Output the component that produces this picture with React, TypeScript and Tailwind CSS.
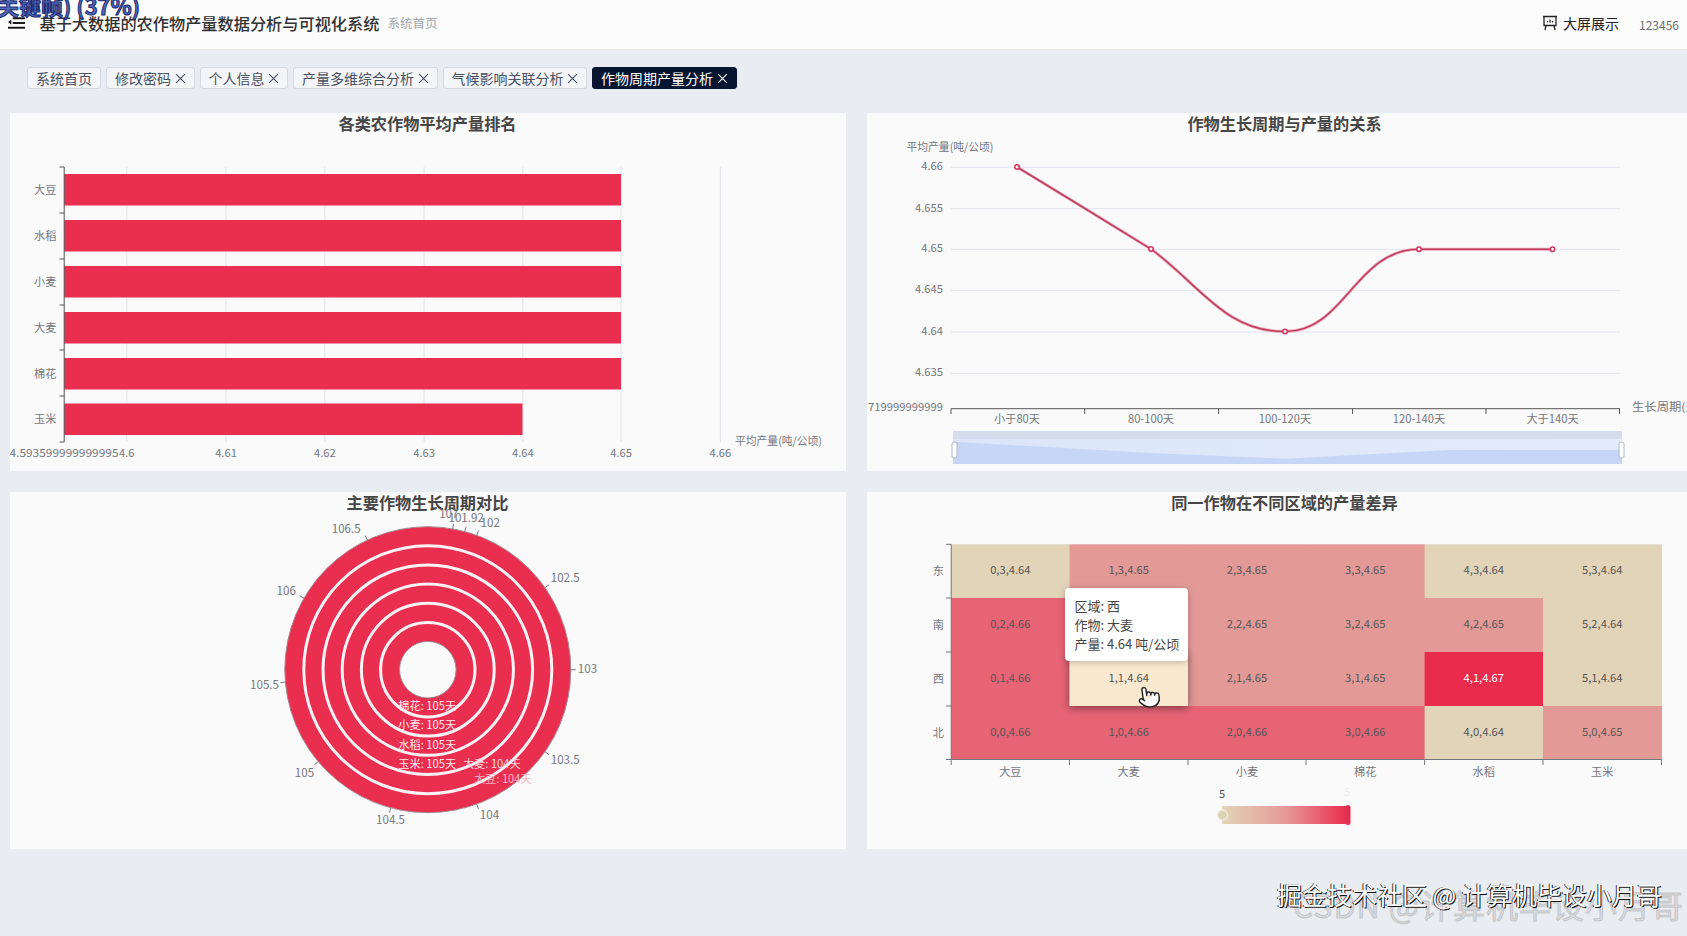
import type { ReactNode } from "react";
import { Pointer } from "lucide-react";

const TICK = "#74767e";
const GRID = "#e2e4ea";
const RED = "#e92e50";
const CURVE = "M1017 167 C1060 193 1110 224 1151 249 C1200 285 1225 332 1285 331.5 C1345 332 1355 249.3 1419 249.3 L1552.5 249.3";

const TAGS = [
  { label: "系统首页", closable: false },
  { label: "修改密码", closable: true },
  { label: "个人信息", closable: true },
  { label: "产量多维综合分析", closable: true },
  { label: "气候影响关联分析", closable: true },
  { label: "作物周期产量分析", closable: true, active: true },
];

function Panel({ title, titleClass, children, className = "" }: { title: string; titleClass: string; children: ReactNode; className?: string }) {
  return (
    <section className={`relative bg-[#fafafa] ${className}`}>
      <h2 className={`h-6 text-center text-[16.2px] font-bold text-[#464646] ${titleClass}`}>{title}</h2>
      {children}
    </section>
  );
}

function RankChart() {
  const bars = [
    { name: "大豆", y: 174, end: 621.5 },
    { name: "水稻", y: 220, end: 621.5 },
    { name: "小麦", y: 266, end: 621.5 },
    { name: "大麦", y: 312, end: 621.5 },
    { name: "棉花", y: 358, end: 621.5 },
    { name: "玉米", y: 403.5, end: 523 },
  ];
  const grid = [
    { x: 127.3, label: "4.6" },
    { x: 226.5, label: "4.61" },
    { x: 325.3, label: "4.62" },
    { x: 424.6, label: "4.63" },
    { x: 523.3, label: "4.64" },
    { x: 621.5, label: "4.65" },
    { x: 720.8, label: "4.66" },
  ];
  return (
    <svg viewBox="10.5 137 836 334" className="block h-[334px] w-[836px]" fontSize="11.2" fill={TICK}>
      {grid.map((g) => (
        <g key={g.x}>
          <line x1={g.x} x2={g.x} y1="167" y2="442" stroke={GRID} />
          <text x={g.x} y="457" textAnchor="middle">{g.label}</text>
        </g>
      ))}
      <text x="10" y="457" textLength="109" lengthAdjust="spacingAndGlyphs">4.593599999999995</text>
      <text x="735.5" y="445" textLength="87" lengthAdjust="spacingAndGlyphs">平均产量(吨/公顷)</text>
      {bars.map((b) => (
        <g key={b.name}>
          <rect x="64.7" y={b.y} width={b.end - 64.7} height="31.5" fill={RED} />
          <text x="57" y={b.y + 19.5} textAnchor="end">{b.name}</text>
        </g>
      ))}
      <line x1="64.7" x2="64.7" y1="167" y2="442" stroke="#555" />
      {[167, 213, 259, 305, 350, 396, 442].map((y) => (
        <line key={y} x1="60" x2="64.7" y1={y} y2={y} stroke="#555" />
      ))}
    </svg>
  );
}

function LineChart() {
  const yTicks = [
    { y: 167.3, label: "4.66" },
    { y: 208.7, label: "4.655" },
    { y: 249.3, label: "4.65" },
    { y: 290.3, label: "4.645" },
    { y: 332, label: "4.64" },
    { y: 373.3, label: "4.635" },
  ];
  const xLabels = [
    { x: 1017, label: "小于80天" },
    { x: 1151, label: "80-100天" },
    { x: 1285, label: "100-120天" },
    { x: 1419, label: "120-140天" },
    { x: 1552.5, label: "大于140天" },
  ];
  const points = [
    [1017, 167],
    [1151, 249],
    [1285, 331.5],
    [1419, 249.3],
    [1552.5, 249.3],
  ];
  return (
    <svg viewBox="867 137 836 334" className="block h-[334px] w-[836px]" fontSize="11.2" fill={TICK}>
      <defs>
        <linearGradient id="zoomBg" x1="0" x2="1" y1="0" y2="0">
          <stop offset="0" stopColor="#dbe6fa" />
          <stop offset="1" stopColor="#e2ebfb" />
        </linearGradient>
      </defs>
      <text x="906.5" y="150.5" textLength="87" lengthAdjust="spacingAndGlyphs">平均产量(吨/公顷)</text>
      {yTicks.map((t) => (
        <g key={t.label}>
          <line x1="951" x2="1620" y1={t.y} y2={t.y} stroke={GRID} />
          <text x="943" y={t.y + 3} textAnchor="end">{t.label}</text>
        </g>
      ))}
      <text x="868" y="411" textLength="75" lengthAdjust="spacingAndGlyphs">719999999999</text>
      <line x1="951" x2="1620" y1="408.7" y2="408.7" stroke="#555" />
      {[951, 1084.7, 1218.6, 1352.6, 1486, 1619.5].map((x) => (
        <line key={x} x1={x} x2={x} y1="408.7" y2="414" stroke="#555" />
      ))}
      {xLabels.map((l) => (
        <text key={l.x} x={l.x} y="423" textAnchor="middle">{l.label}</text>
      ))}
      <text x="1632" y="411" textLength="70" lengthAdjust="spacingAndGlyphs">生长周期(天)</text>
      <path d={CURVE} fill="none" stroke="#f5a3b7" strokeWidth="3" />
      <path d={CURVE} fill="none" stroke="#b9405f" strokeWidth="1.5" />
      {points.map(([x, y]) => (
        <circle key={x} cx={x} cy={y} r="2.2" fill="#fafafa" stroke="#d62f5c" strokeWidth="1.5" />
      ))}
      {/* data zoom */}
      <rect x="953" y="431" width="669" height="33" fill="url(#zoomBg)" />
      <rect x="953" y="431" width="669" height="8" fill="#d5dcec" />
      <path d="M953 441.7 L1151 453 L1285 458.7 L1450 450 L1622 450 L1622 464 L953 464 Z" fill="#c7d5f6" />
      <rect x="952" y="442" width="5" height="16" rx="2" fill="#fff" stroke="#acb8d1" />
      <rect x="1619" y="442" width="5" height="16" rx="2" fill="#fff" stroke="#acb8d1" />
    </svg>
  );
}

function PolarChart() {
  const cx = 428.3;
  const cy = 669.7;
  const outer = 143;
  const ticks = [
    { label: "107", deg: 10, x: 449.3, y: 514.3 },
    { label: "101.92", deg: 15, x: 466.7, y: 518.3 },
    { label: "102", deg: 20, x: 490.7, y: 522.7 },
    { label: "102.5", deg: 55, x: 565.7, y: 577.7 },
    { label: "103", deg: 90, x: 588, y: 669 },
    { label: "103.5", deg: 125, x: 565.7, y: 760 },
    { label: "104", deg: 160, x: 490, y: 815 },
    { label: "104.5", deg: 195, x: 391, y: 820 },
    { label: "105", deg: 230, x: 305, y: 772.7 },
    { label: "105.5", deg: 265, x: 265, y: 685 },
    { label: "106", deg: 300, x: 286.7, y: 591 },
    { label: "106.5", deg: 335, x: 346.7, y: 529 },
  ];
  const labels = [
    { text: "棉花: 105天", x: 427.7, y: 706, fill: "#ffe9ee" },
    { text: "小麦: 105天", x: 427.7, y: 725, fill: "#ffe9ee" },
    { text: "水稻: 105天", x: 427.7, y: 744.7, fill: "#ffe9ee" },
    { text: "玉米: 105天", x: 427.7, y: 764, fill: "#ffe9ee" },
    { text: "大麦: 104天", x: 492.3, y: 763.5, fill: "#ffd6df" },
    { text: "大豆: 104天", x: 503.3, y: 779.3, fill: "#f9b4c4" },
  ];
  return (
    <svg viewBox="10.5 516 836 333" className="block h-[333px] w-[836px] overflow-visible" fontSize="11.6" fill={TICK}>
      <circle cx={cx} cy={cy} r={outer} fill={RED} stroke="#a9898f" strokeWidth="1" />
      {[124, 104.8, 85.6, 66.4, 47.2].map((r) => (
        <circle key={r} cx={cx} cy={cy} r={r} fill="none" stroke="#fdf3f4" strokeWidth="3" />
      ))}
      <circle cx={cx} cy={cy} r="28.3" fill="#fafafa" stroke="#9c8a8d" strokeWidth="1" />
      {ticks.map((t) => {
        const a = (t.deg * Math.PI) / 180;
        return (
          <g key={t.label}>
            <line
              x1={cx + outer * Math.sin(a)}
              y1={cy - outer * Math.cos(a)}
              x2={cx + (outer + 5) * Math.sin(a)}
              y2={cy - (outer + 5) * Math.cos(a)}
              stroke={TICK}
            />
            <text x={t.x} y={t.y + 4} textAnchor="middle">{t.label}</text>
          </g>
        );
      })}
      {labels.map((l) => (
        <text key={l.text} x={l.x} y={l.y + 4} textAnchor="middle" fill={l.fill} fontSize="11.2">{l.text}</text>
      ))}
    </svg>
  );
}

const HEAT_X = [951.2, 1069.5, 1188, 1306, 1424.6, 1543, 1661.5];
const HEAT_Y = [544.3, 598, 652, 706, 759.5];
const HEAT_ROWS = [
  { name: "东", row: 3, values: [4.64, 4.65, 4.65, 4.65, 4.64, 4.64] },
  { name: "南", row: 2, values: [4.66, 4.65, 4.65, 4.65, 4.65, 4.64] },
  { name: "西", row: 1, values: [4.66, 4.64, 4.65, 4.65, 4.67, 4.64] },
  { name: "北", row: 0, values: [4.66, 4.66, 4.66, 4.66, 4.64, 4.65] },
];
const HEAT_COLS = ["大豆", "大麦", "小麦", "棉花", "水稻", "玉米"];
const HEAT_COLOR: Record<string, string> = {
  "4.64": "#e2d4b8",
  "4.65": "#e39a97",
  "4.66": "#e76475",
  "4.67": "#e92c4e",
};

function HeatChart() {
  return (
    <svg viewBox="867 516 836 333" className="block h-[333px] w-[836px]" fontSize="11.2" fill={TICK}>
      <defs>
        <linearGradient id="heatScale" x1="0" x2="1" y1="0" y2="0">
          <stop offset="0" stopColor="#e2d4b8" />
          <stop offset="0.5" stopColor="#e69a98" />
          <stop offset="1" stopColor="#e92c4e" />
        </linearGradient>
      </defs>
      {HEAT_ROWS.map((r, ri) =>
        r.values.map((v, ci) => (
          <rect
            key={`${ri}-${ci}`}
            x={HEAT_X[ci]}
            y={HEAT_Y[ri]}
            width={HEAT_X[ci + 1] - HEAT_X[ci] + 0.5}
            height={HEAT_Y[ri + 1] - HEAT_Y[ri] + 0.5}
            fill={HEAT_COLOR[v.toFixed(2)]}
          />
        )),
      )}
      <rect
        x={HEAT_X[1]}
        y={HEAT_Y[2]}
        width="118.5"
        height="54"
        fill="#f9e8d0"
        className="drop-shadow-[0_2px_4px_rgba(0,0,0,0.45)]"
      />
      {HEAT_ROWS.map((r, ri) =>
        r.values.map((v, ci) => (
          <text
            key={`${ri}-${ci}`}
            x={(HEAT_X[ci] + HEAT_X[ci + 1]) / 2}
            y={(HEAT_Y[ri] + HEAT_Y[ri + 1]) / 2 + 3}
            textAnchor="middle"
            fill={v === 4.67 ? "#fff" : "#555"}
          >
            {`${ci},${r.row},${v.toFixed(2)}`}
          </text>
        )),
      )}
      <line x1="951.2" x2="951.2" y1="544.3" y2="759.5" stroke={TICK} />
      <line x1="951.2" x2="1661.5" y1="759.5" y2="759.5" stroke={TICK} />
      {HEAT_Y.map((y) => (
        <line key={y} x1="946" x2="951.2" y1={y} y2={y} stroke={TICK} />
      ))}
      {HEAT_X.map((x) => (
        <line key={x} x1={x} x2={x} y1="759.5" y2="765" stroke={TICK} />
      ))}
      {HEAT_ROWS.map((r, ri) => (
        <text key={r.name} x="944" y={(HEAT_Y[ri] + HEAT_Y[ri + 1]) / 2 + 4} textAnchor="end">{r.name}</text>
      ))}
      {HEAT_COLS.map((c, ci) => (
        <text key={c} x={(HEAT_X[ci] + HEAT_X[ci + 1]) / 2} y="775.5" textAnchor="middle">{c}</text>
      ))}
      {/* visual map */}
      <text x="1222" y="797.5" textAnchor="middle" fontSize="11" fill="#555">5</text>
      <text x="1347" y="796" textAnchor="middle" fontSize="11" fill="#ececec">5</text>
      <rect x="1222" y="806" width="126" height="18" fill="url(#heatScale)" />
      <circle cx="1222.5" cy="815" r="5" fill="#d8d4b4" stroke="#efeadb" strokeWidth="1.5" />
      <rect x="1345.5" y="805" width="5" height="20" rx="2.5" fill="#e0304f" />
    </svg>
  );
}

export default function App() {
  return (
    <div className="relative flex h-screen w-screen flex-col overflow-hidden bg-[#e9ecf0] font-['Noto_Sans_CJK_SC','Liberation_Sans',sans-serif]">
      <header className="flex h-[50px] shrink-0 items-center border-b border-[#e3e5e9] bg-[#fcfcfc] pb-[3px]">
        <svg viewBox="0 0 18 12" className="ml-[7.5px] h-3 w-[17px]" fill="#111">
          <rect x="5" y="0" width="13" height="2" />
          <rect x="5" y="5" width="13" height="2" />
          <rect x="0" y="10" width="18" height="2" />
          <path d="M3.5 2.5v5L0 5z" />
        </svg>
        <h1 className="ml-[15px] text-[16.2px] font-medium text-[#303133]">基于大数据的农作物产量数据分析与可视化系统</h1>
        <span className="ml-2 text-[12.5px] text-[#a0a4ab]">系统首页</span>
        <div className="ml-auto flex items-center text-sm text-[#222]">
          <svg viewBox="0 0 16 16" className="h-4 w-4" fill="none" stroke="#222" strokeWidth="1.3">
            <path d="M1 1.5h14M2 1.5v9h12v-9M4 10.5 3 15M12 10.5l1 4.5M5.5 7.5V6M8 7.5V4.5M10.5 7.5V6" />
          </svg>
          <span className="ml-[5px]">大屏展示</span>
          <span className="ml-5 mr-2 mt-[3px] text-xs text-[#6b6b6b]">123456</span>
        </div>
      </header>

      <nav className="flex h-[63px] shrink-0 items-start gap-[5px] pl-[27px] pt-[17px]">
        {TAGS.map((t) => (
          <span
            key={t.label}
            className={
              t.active
                ? "flex h-[22px] items-center rounded-[3px] border border-[#071530] bg-[#071530] px-2 text-sm text-white"
                : "flex h-[22px] items-center rounded-[3px] border border-[#d4d8df] bg-[#f3f5f8] px-2 text-sm text-[#495060]"
            }
          >
            {t.label}
            <Close show={t.closable} />
          </span>
        ))}
      </nav>

      <main className="grid grid-cols-[836px_836px] gap-x-[21px] gap-y-[21px] pl-[9.5px]">
        <Panel title="各类农作物平均产量排名" titleClass="leading-[21px]" className="h-[358px]">
          <RankChart />
        </Panel>
        <Panel title="作物生长周期与产量的关系" titleClass="leading-[21px]" className="h-[358px]">
          <LineChart />
        </Panel>
        <Panel title="主要作物生长周期对比" titleClass="leading-[20px]" className="h-[357px]">
          <PolarChart />
        </Panel>
        <Panel title="同一作物在不同区域的产量差异" titleClass="leading-[20px]" className="h-[357px]">
          <HeatChart />
          <div className="absolute left-[198px] top-[96px] w-[123px] rounded bg-white py-[8px] pl-[10px] text-[13px] leading-[19px] text-[#444] shadow-[0_1px_6px_rgba(0,0,0,0.25)]">
            <p>区域: 西</p>
            <p>作物: 大麦</p>
            <p className="whitespace-nowrap">产量: 4.64 吨/公顷</p>
          </div>
          <Pointer className="absolute left-[270px] top-[193px] h-[24px] w-[24px] rotate-[-8deg] fill-white text-[#222]" strokeWidth={1.4} />
        </Panel>
      </main>

      {/* video overlay text */}
      <div className="absolute -left-[3px] -top-[11px] whitespace-nowrap text-[22px] font-bold leading-[32px] text-[#5268b8] [-webkit-text-stroke:1px_#1c2a70]">
        关键帧) (37%)
      </div>
      <div className="absolute right-[3px] top-[881px] whitespace-nowrap text-[32px] leading-[46px] tracking-[1px] text-[rgba(170,170,175,0.25)] [-webkit-text-stroke:1px_rgba(140,140,145,0.35)]">
        CSDN @计算机毕设小月哥
      </div>
      <div className="absolute left-[1277px] top-[877px] whitespace-nowrap text-[25px] leading-[34px] text-white [text-shadow:1px_1px_0_#111,-1px_0_0_#333]">
        掘金技术社区 @ 计算机毕设小月哥
      </div>
    </div>
  );
}

function Close({ show }: { show: boolean }) {
  if (!show) return null;
  return (
    <svg viewBox="0 0 10 10" className="ml-[3.5px] mt-px h-[11px] w-[11px] shrink-0" fill="none" stroke="currentColor" strokeWidth="1">
      <path d="M1 1l8 8M9 1l-8 8" />
    </svg>
  );
}
